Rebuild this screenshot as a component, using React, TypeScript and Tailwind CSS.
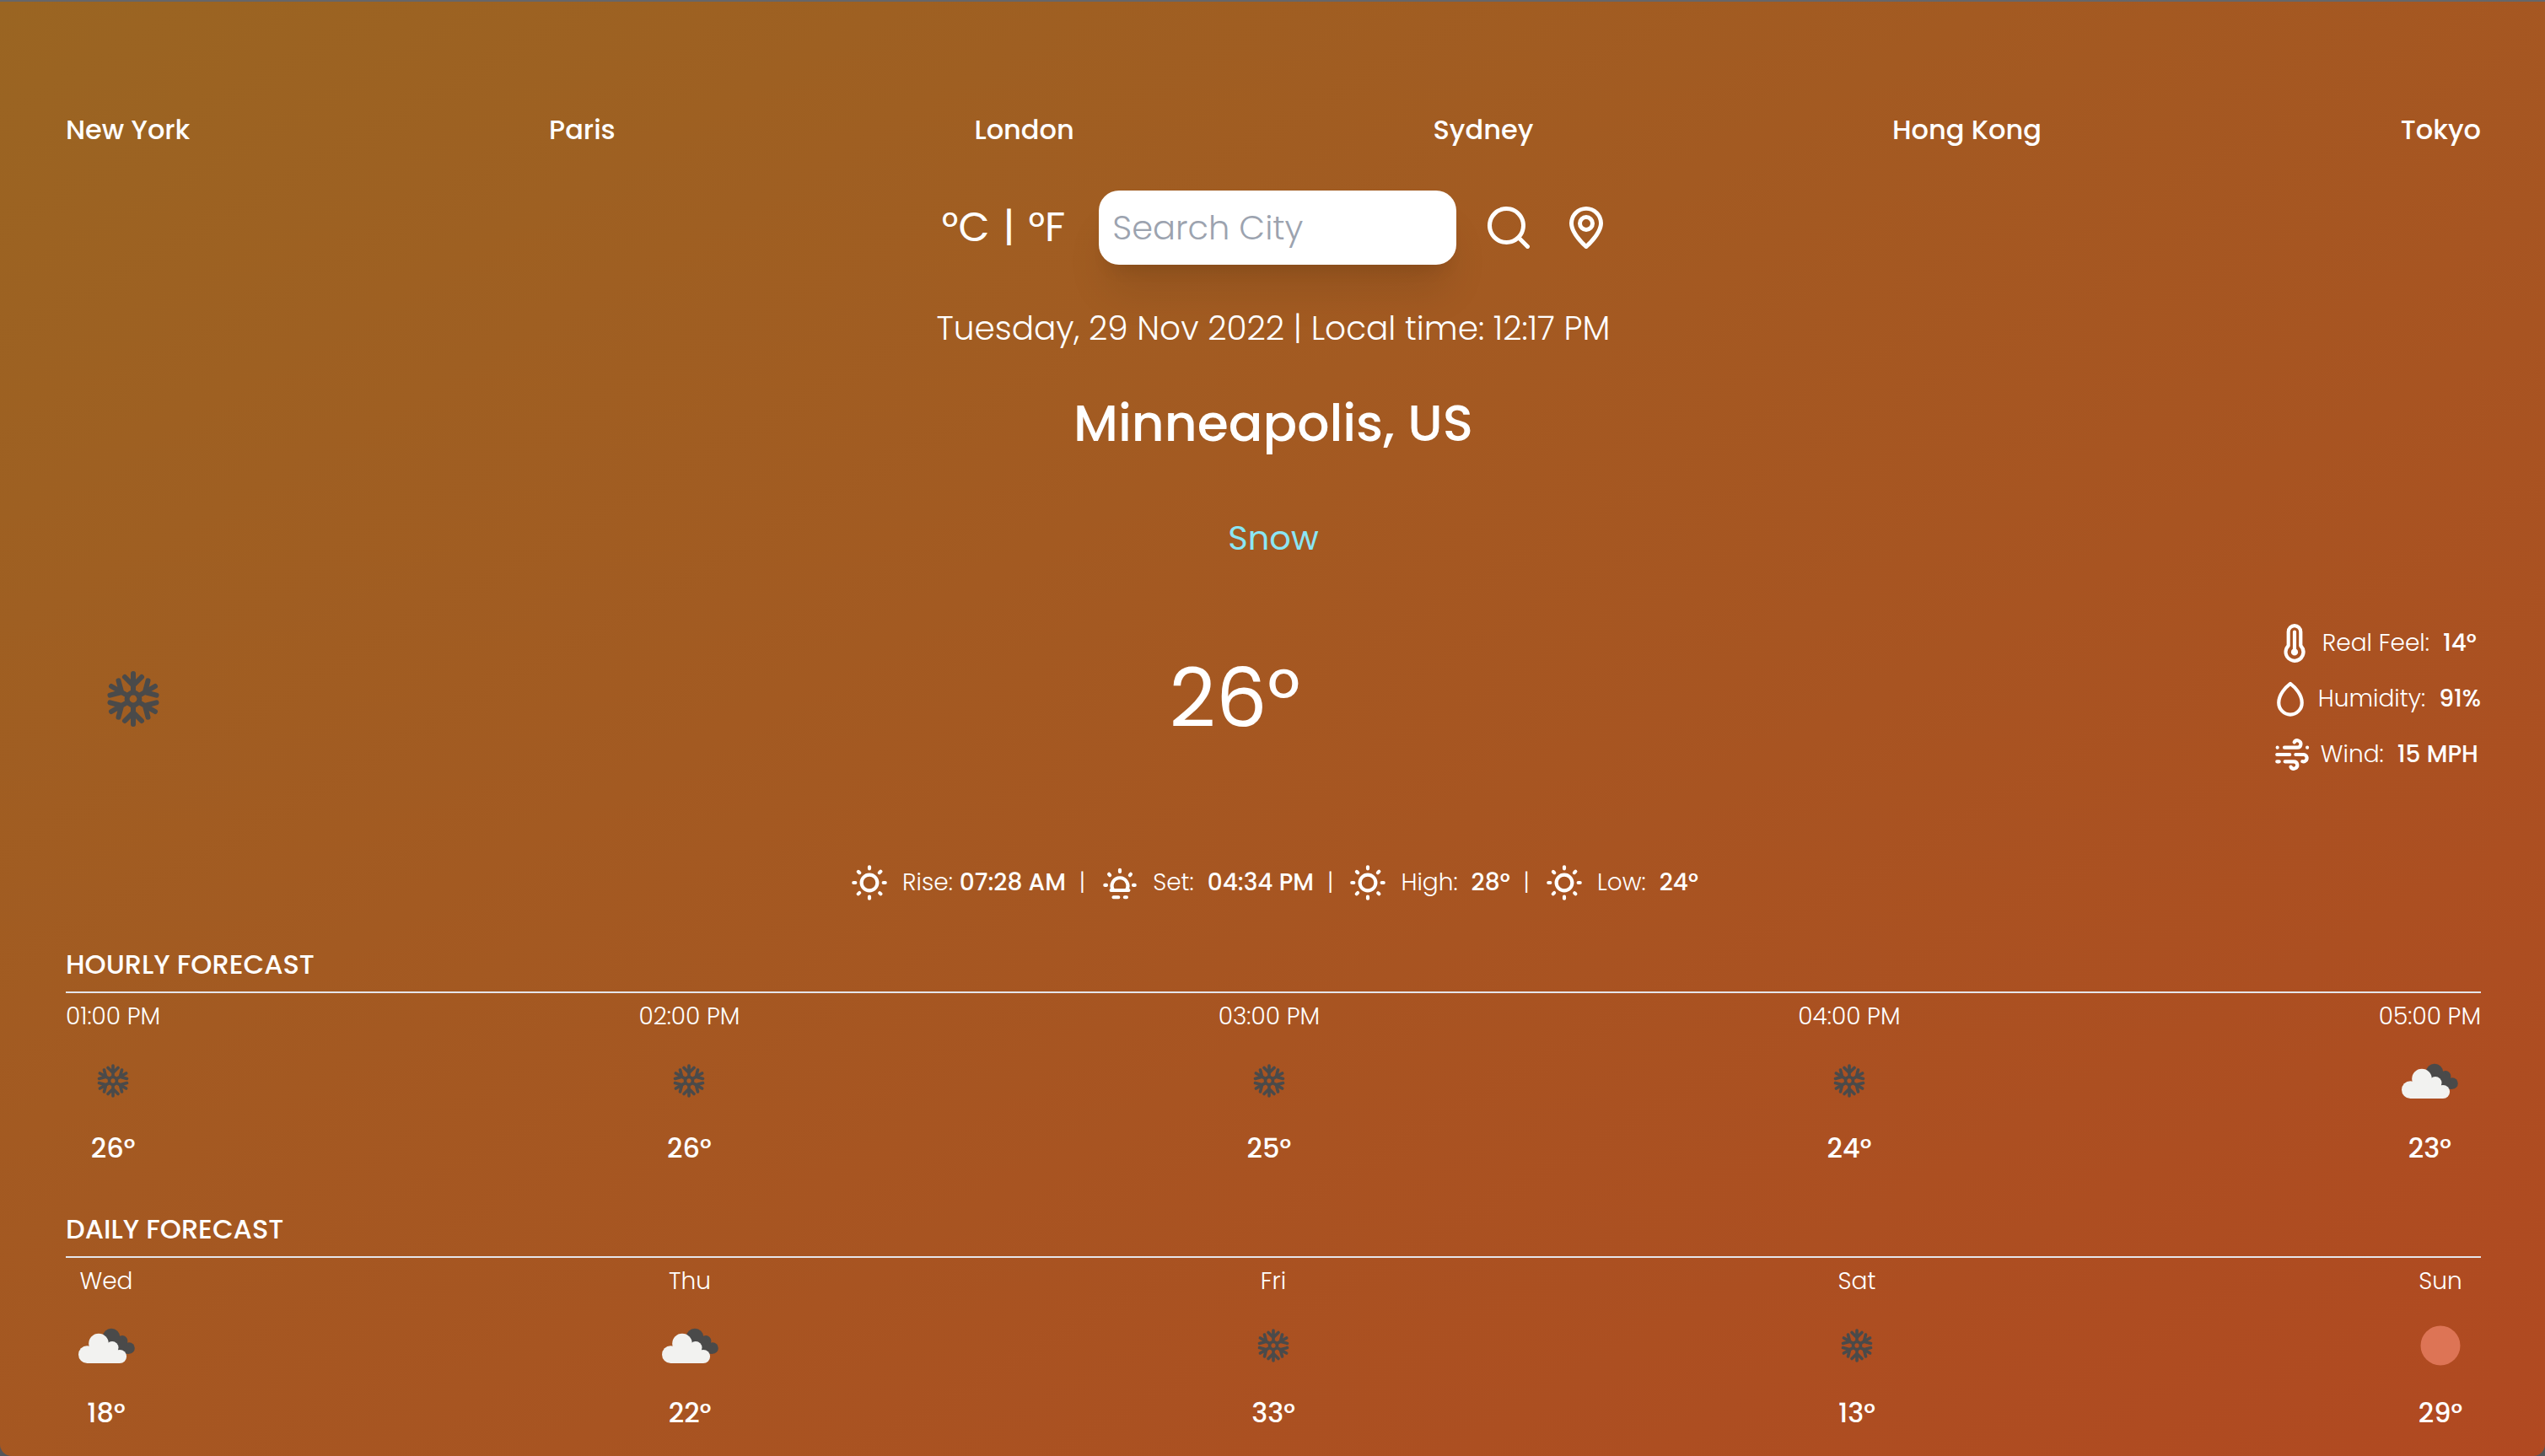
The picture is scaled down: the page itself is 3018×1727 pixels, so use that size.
import type { ReactNode } from "react";

type Sky = "snow" | "clouds" | "clear";

const cities = ["New York", "Paris", "London", "Sydney", "Hong Kong", "Tokyo"];

const hourly: { title: string; sky: Sky; temp: string }[] = [
  { title: "01:00 PM", sky: "snow", temp: "26°" },
  { title: "02:00 PM", sky: "snow", temp: "26°" },
  { title: "03:00 PM", sky: "snow", temp: "25°" },
  { title: "04:00 PM", sky: "snow", temp: "24°" },
  { title: "05:00 PM", sky: "clouds", temp: "23°" },
];

const daily: { title: string; sky: Sky; temp: string }[] = [
  { title: "Wed", sky: "clouds", temp: "18°" },
  { title: "Thu", sky: "clouds", temp: "22°" },
  { title: "Fri", sky: "snow", temp: "33°" },
  { title: "Sat", sky: "snow", temp: "13°" },
  { title: "Sun", sky: "clear", temp: "29°" },
];

function SnowIcon({ className }: { className: string }) {
  return (
    <svg className={className} viewBox="0 0 160 160" fill="none" stroke="#4a4a4a" strokeWidth="6" strokeLinecap="round" strokeLinejoin="round" aria-hidden="true">
      <circle cx="80" cy="80" r="7.4" />
      {[0, 60, 120, 180, 240, 300].map((angle) => (
        <path key={angle} transform={`rotate(${angle} 80 80)`} d="M80 72V50M70 54l10 10l10-10" />
      ))}
    </svg>
  );
}

function CloudsIcon({ className }: { className: string }) {
  return (
    <svg className={className} viewBox="0 0 96 96" aria-hidden="true">
      <g fill="#4a4a4a">
        <circle cx="54" cy="38" r="10.3" />
        <circle cx="67" cy="42.5" r="6.4" />
        <circle cx="75" cy="51" r="6.8" />
        <path d="M50 38h17l8 13v6.8H60z" />
      </g>
      <g fill="#f2f2f0">
        <circle cx="25.4" cy="58.7" r="10.4" />
        <circle cx="39" cy="45.6" r="11.8" />
        <circle cx="55" cy="50.6" r="7.5" />
        <circle cx="64" cy="61" r="8.1" />
        <path d="M25 69.1V55l14-10h12l13 10v14.1z" />
      </g>
    </svg>
  );
}

function ClearIcon({ className }: { className: string }) {
  return (
    <svg className={className} viewBox="0 0 96 96" aria-hidden="true">
      <circle cx="48" cy="48" r="23.5" fill="#dd7455" />
    </svg>
  );
}

function SkyIcon({ sky, className }: { sky: Sky; className: string }) {
  if (sky === "snow") return <SnowIcon className={className} />;
  if (sky === "clouds") return <CloudsIcon className={className} />;
  return <ClearIcon className={className} />;
}

function Glyph({ d, className = "size-[50px]" }: { d: string; className?: string }) {
  return (
    <svg className={className} viewBox="0 0 24 24" fill="currentColor" aria-hidden="true">
      <path d={d} />
    </svg>
  );
}

function LineGlyph({ d }: { d: string }) {
  return (
    <svg className="size-[50px]" viewBox="0 0 24 24" fill="none" stroke="currentColor" strokeWidth="2" strokeLinecap="round" strokeLinejoin="round" aria-hidden="true">
      <path d={d} />
    </svg>
  );
}

const searchPath =
  "M21.71,20.29,18,16.61A9,9,0,1,0,16.61,18l3.68,3.68a1,1,0,0,0,1.42,0A1,1,0,0,0,21.71,20.29ZM11,18a7,7,0,1,1,7-7A7,7,0,0,1,11,18Z";
const pinPath =
  "M12,2a8,8,0,0,0-8,7.92c0,5.48,7.05,11.58,7.35,11.84a1,1,0,0,0,1.3,0C13,21.5,20,15.4,20,9.92A8,8,0,0,0,12,2Zm0,17.65c-1.67-1.59-6-6-6-9.73a6,6,0,0,1,12,0C18,13.61,13.67,18.06,12,19.65ZM12,6a4,4,0,1,0,4,4A4,4,0,0,0,12,6Zm0,6a2,2,0,1,1,2-2A2,2,0,0,1,12,12Z";
const thermometerPath =
  "M13,15.28V5.5a1,1,0,0,0-2,0v9.78A2,2,0,0,0,10,17a2,2,0,0,0,4,0A2,2,0,0,0,13,15.28ZM16.5,13V5.5a4.5,4.5,0,0,0-9,0V13a6,6,0,0,0,3.21,9.83A7,7,0,0,0,12,23,6,6,0,0,0,16.5,13Zm-2,7.07a4,4,0,0,1-6.42-2.2,4,4,0,0,1,1.1-3.76,1,1,0,0,0,.3-.71V5.5a2.5,2.5,0,0,1,5,0v7.94a1,1,0,0,0,.3.71,4,4,0,0,1-.28,6Z";
const sunPath =
  "M5.64,17l-.71.71a1,1,0,0,0,0,1.41,1,1,0,0,0,1.41,0l.71-.71A1,1,0,0,0,5.64,17ZM5,12a1,1,0,0,0-1-1H3a1,1,0,0,0,0,2H4A1,1,0,0,0,5,12Zm7-7a1,1,0,0,0,1-1V3a1,1,0,0,0-2,0V4A1,1,0,0,0,12,5ZM5.64,7.05a1,1,0,0,0,.7.29,1,1,0,0,0,.71-.29,1,1,0,0,0,0-1.41l-.71-.71A1,1,0,0,0,4.93,6.34Zm12,.29a1,1,0,0,0,.7-.29l.71-.71a1,1,0,1,0-1.41-1.41L17,5.64a1,1,0,0,0,0,1.41A1,1,0,0,0,17.66,7.34ZM21,11H20a1,1,0,0,0,0,2h1a1,1,0,0,0,0-2Zm-9,8a1,1,0,0,0-1,1v1a1,1,0,0,0,2,0V20A1,1,0,0,0,12,19ZM18.36,17A1,1,0,0,0,17,18.36l.71.71a1,1,0,0,0,1.41,0,1,1,0,0,0,0-1.41ZM12,6.5A5.5,5.5,0,1,0,17.5,12,5.51,5.51,0,0,0,12,6.5Zm0,9A3.5,3.5,0,1,1,15.5,12,3.5,3.5,0,0,1,12,15.5Z";
const tearPath = "M12 3.3C9.3 5.3 5.4 9.6 5.4 14.1a6.6 6.8 0 0 0 13.2 0C18.6 9.6 14.7 5.3 12 3.3z";
const windPath =
  "M3.2 8h.01M7.2 8h7.3a2 2 0 1 0-1.7-3M20.2 8h.01M3 12h7.2M13.6 12h4.6a2 2 0 1 1-.8 3.9M3 16h1.2M7.5 16h5a2 2 0 1 1-1.7 3";
const sunsetPath =
  "M12 4.7v1M5.8 7.1l.5.6M18.2 7.1l-.5.6M3.5 13.4h.8M19.7 13.4h.8M7 16.3h10M8.1 16a4.5 4.5 0 1 1 7.8 0M8.4 20.3h2.8M14.8 20.3h1";

function Detail({ icon, label, value }: { icon: ReactNode; label: string; value: string }) {
  return (
    <div className="flex items-center justify-center text-[28px] leading-[40px] font-light">
      <span className="mr-2">{icon}</span>
      {label}
      <span className="ml-4 font-medium">{value}</span>
    </div>
  );
}

function Stat({ icon, label, value, tight = false }: { icon: ReactNode; label: string; value: string; tight?: boolean }) {
  return (
    <div className="flex items-center gap-3.5">
      {icon}
      <p className="font-light">
        {label}
        <span className={tight ? "ml-2 font-medium" : "ml-4 font-medium"}>{value}</span>
      </p>
    </div>
  );
}

function Forecast({ title, items }: { title: string; items: { title: string; sky: Sky; temp: string }[] }) {
  return (
    <section className="mt-12">
      <h2 className="text-[32px] leading-[48px] font-medium uppercase">{title}</h2>
      <hr className="my-2 border-t-2 border-[#e5e5ea]" />
      <div className="flex items-center justify-between">
        {items.map((item) => (
          <div key={item.title} className="flex flex-col items-center">
            <p className="text-[28px] leading-[40px] font-light">{item.title}</p>
            <SkyIcon sky={item.sky} className="my-2 size-24" />
            <p className="text-[32px] leading-[48px] font-medium">{item.temp}</p>
          </div>
        ))}
      </div>
    </section>
  );
}

export default function App() {
  return (
    <div className="min-h-screen bg-[#55565a] font-['Poppins',Inter,sans-serif] text-white">
      <main className="min-h-screen rounded-b-[14px] border-t-2 border-[#666669] bg-linear-to-br/srgb from-[#9a6522] to-[#b14921] pt-32 pr-[76px] pl-[78px]">
        <nav className="flex items-center justify-between">
          {cities.map((city) => (
            <button key={city} type="button" className="text-[32px] leading-[48px] font-medium">
              {city}
            </button>
          ))}
        </nav>

        <form className="mt-12 flex items-center justify-center pl-2" onSubmit={(event) => event.preventDefault()}>
          <div className="mr-10 flex items-center text-[48px] leading-[64px]">
            <button type="button">°C</button>
            <span className="mx-4">|</span>
            <button type="button">°F</button>
          </div>
          <input
            type="text"
            aria-label="Search City"
            placeholder="Search City"
            className="h-[88px] w-[424px] rounded-3xl bg-white p-4 text-[40px] leading-[56px] font-light text-gray-800 shadow-[0_40px_50px_-10px_rgba(0,0,0,0.1),0_16px_20px_-12px_rgba(0,0,0,0.1)] placeholder:text-[#9ca3af] focus:outline-none"
          />
          <button type="submit" aria-label="Search" className="ml-8">
            <Glyph d={searchPath} className="size-[60px]" />
          </button>
          <button type="button" aria-label="Use my location" className="ml-8">
            <Glyph d={pinPath} className="size-[60px]" />
          </button>
        </form>

        <p className="mt-12 text-center text-[39px] leading-[56px] font-light">
          Tuesday, 29 Nov 2022 | Local time: 12:17 PM
        </p>
        <h1 className="mt-12 text-center text-[60px] leading-[72px] font-medium">Minneapolis, US</h1>
        <p className="mt-[72px] text-center text-[40px] leading-[56px] text-[#8ae6f5]">Snow</p>

        <section className="mt-[72px] flex items-center justify-between">
          <SnowIcon className="size-40" />
          <p className="text-[96px] leading-[96px]">26°</p>
          <div className="flex flex-col gap-4">
            <Detail icon={<Glyph d={thermometerPath} />} label="Real Feel:" value="14°" />
            <Detail icon={<LineGlyph d={tearPath} />} label="Humidity:" value="91%" />
            <Detail icon={<LineGlyph d={windPath} />} label="Wind:" value="15 MPH" />
          </div>
        </section>

        <section className="mt-[102px] flex items-center justify-center gap-4 text-[28px] leading-[40px]">
          <Stat icon={<Glyph d={sunPath} />} label="Rise:" value="07:28 AM" tight />
          <span className="font-light">|</span>
          <Stat icon={<LineGlyph d={sunsetPath} />} label="Set:" value="04:34 PM" />
          <span className="font-light">|</span>
          <Stat icon={<Glyph d={sunPath} />} label="High:" value="28°" />
          <span className="font-light">|</span>
          <Stat icon={<Glyph d={sunPath} />} label="Low:" value="24°" />
        </section>

        <Forecast title="Hourly Forecast" items={hourly} />
        <Forecast title="Daily Forecast" items={daily} />
      </main>
    </div>
  );
}
